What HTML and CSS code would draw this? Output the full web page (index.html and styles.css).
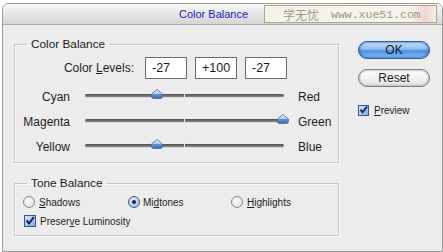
FILE: index.html
```html
<!DOCTYPE html>
<html lang="en">
<head>
    <meta charset="UTF-8">
    <meta name="viewport" content="width=device-width, initial-scale=1.0">
    <title>Color Balance</title>
    <link rel="stylesheet" href="styles.css">
</head>
<body>
    <div class="dialog">
        <!-- title bar -->
        <div class="titlebar">
            <span class="title">Color Balance</span>
            <div class="watermark">
                <span class="wm-cn">学无忧</span>
                <span class="wm-url">www.xue51.com</span>
            </div>
        </div>

        <div class="content">
            <div class="left">
                <fieldset class="group group-color">
                    <legend>Color Balance</legend>
                    <div class="levels">
                        <label class="levels-label">Color <u>L</u>evels:</label>
                        <input type="text" class="level" value="-27">
                        <input type="text" class="level" value="+100">
                        <input type="text" class="level" value="-27">
                    </div>
                    <div class="sliders">
                        <span class="s-left">Cyan</span>
                        <div class="track">
                            <span class="mid"></span>
                            <svg class="thumb" style="left:66px" width="12" height="10" viewBox="0 0 12 10"><use href="#thumb"/></svg>
                        </div>
                        <span class="s-right">Red</span>

                        <span class="s-left">Magenta</span>
                        <div class="track">
                            <span class="mid"></span>
                            <svg class="thumb" style="left:192px" width="12" height="10" viewBox="0 0 12 10"><use href="#thumb"/></svg>
                        </div>
                        <span class="s-right">Green</span>

                        <span class="s-left">Yellow</span>
                        <div class="track">
                            <span class="mid"></span>
                            <svg class="thumb" style="left:66px" width="12" height="10" viewBox="0 0 12 10"><use href="#thumb"/></svg>
                        </div>
                        <span class="s-right">Blue</span>
                    </div>
                </fieldset>

                <fieldset class="group group-tone">
                    <legend>Tone Balance</legend>
                    <div class="radios">
                        <label class="opt"><span class="radio"></span><u>S</u>hadows</label>
                        <label class="opt"><span class="radio checked"></span>Mi<u>d</u>tones</label>
                        <label class="opt"><span class="radio"></span><u>H</u>ighlights</label>
                    </div>
                    <label class="opt check-row">
                        <span class="checkbox"><svg width="10" height="10" viewBox="0 0 10 10"><use href="#tick"/></svg></span>Preser<u>v</u>e Luminosity
                    </label>
                </fieldset>
            </div>

            <div class="right">
                <button class="btn btn-ok">OK</button>
                <button class="btn btn-reset">Reset</button>
                <label class="opt preview">
                    <span class="checkbox"><svg width="10" height="10" viewBox="0 0 10 10"><use href="#tick"/></svg></span><u>P</u>review
                </label>
            </div>
        </div>
    </div>

    <!-- shared shapes -->
    <svg class="defs" width="0" height="0">
        <defs>
            <linearGradient id="thumbFill" x1="0" y1="0" x2="0" y2="1">
                <stop offset="0" stop-color="#eef3fb"/>
                <stop offset="0.45" stop-color="#b5cdef"/>
                <stop offset="0.55" stop-color="#5d8fd6"/>
                <stop offset="1" stop-color="#3d6cb8"/>
            </linearGradient>
            <symbol id="thumb" viewBox="0 0 12 10">
                <path d="M6 0.5 L11.5 5 L11.5 7.5 Q11.5 9.5 9.5 9.5 L2.5 9.5 Q0.5 9.5 0.5 7.5 L0.5 5 Z" fill="url(#thumbFill)" stroke="#47679a" stroke-width="0.8"/>
            </symbol>
            <symbol id="tick" viewBox="0 0 10 10">
                <path d="M1.5 4.5 L4 7.5 L8.8 1.2" fill="none" stroke="#1a2560" stroke-width="2"/>
            </symbol>
        </defs>
    </svg>
</body>
</html>
```

FILE: styles.css
```css
body {
    margin: 0;
    background: #ffffff;
    font-family: "Liberation Sans", Arial, sans-serif;
    color: #1e1e1e;
}
.defs {
    position: absolute;
}
.dialog {
    margin: 3px 0 0 2px;
    width: 439px;
    height: 247px;
    border: 1px solid #9c9c9c;
    border-radius: 6px 6px 0 0;
    background: #ececec;
    overflow: hidden;
}
.titlebar {
    height: 20px;
    display: flex;
    align-items: flex-start;
    background: linear-gradient(#f7f7f7, #d5d5d5);
    border-bottom: 1px solid #a9a9a9;
}
.title {
    margin: 4px 0 0 176px;
    font-size: 11px;
    color: #2020c8;
}
.watermark {
    margin: 1px 5px 0 auto;
    width: 173px;
    height: 18px;
    display: flex;
    align-items: center;
    gap: 12px;
    padding-left: 18px;
    box-sizing: border-box;
    border: 1px solid #b4a578;
    background: linear-gradient(90deg, #f3f2ed 0%, #f5f4ef 85%, #f2d4d4 94%, #f4f1ec 100%);
}
.wm-cn {
    font-family: "Noto Sans CJK SC", sans-serif;
    font-size: 12px;
    color: #9f9c86;
}
.wm-url {
    font-family: "Liberation Mono", monospace;
    font-size: 11.5px;
    color: #9c987e;
}

.content {
    display: flex;
    padding: 12px 0 0 11px;
}
.left {
    width: 325px;
}
.group {
    margin: 0;
    padding: 0;
    border: 1px solid #c6c6c6;
    box-shadow: inset 1px 1px 0 #fafafa, 1px 1px 0 #fafafa;
}
.group legend {
    margin-left: 12px;
    padding: 0 4px;
    font-size: 11.8px;
    line-height: 14px;
    color: #1a1a1a;
}
.group-color {
    height: 126px;
    box-sizing: border-box;
}
.group-tone {
    margin-top: 13px;
    height: 60px;
    box-sizing: border-box;
}

/* color levels */
.levels {
    display: grid;
    grid-template-columns: 122px 42px 42px 42px;
    column-gap: 8px;
    align-items: center;
    margin-top: 6px;
}
.levels-label {
    text-align: right;
    font-size: 12px;
    margin-right: 3px;
}
.level {
    width: 42px;
    height: 22px;
    box-sizing: border-box;
    border: 1px solid #6a6a6a;
    background: #ffffff;
    padding: 0 0 0 6px;
    font-family: "Liberation Sans", Arial, sans-serif;
    font-size: 12.5px;
    color: #1a1a1a;
}

/* sliders */
.sliders {
    display: grid;
    grid-template-columns: 56px 199px auto;
    grid-auto-rows: 25px;
    column-gap: 14px;
    align-items: center;
    margin-top: 5px;
}
.s-left {
    text-align: right;
    font-size: 12px;
    margin-right: 1px;
}
.s-right {
    font-size: 12px;
}
.track {
    position: relative;
    height: 25px;
}
.track::before {
    content: "";
    position: absolute;
    left: 0;
    right: 0;
    top: 10px;
    height: 3px;
    border-radius: 2px;
    background: linear-gradient(#4c4c4c, #8a8a8a);
    box-shadow: 0 1px 0 #d9d9d9;
}
.mid {
    position: absolute;
    left: 99px;
    top: 8px;
    width: 1px;
    height: 8px;
    background: #e6e6e6;
}
.thumb {
    position: absolute;
    top: 5px;
}

/* tone balance */
.radios {
    display: grid;
    grid-template-columns: 105px 103px auto;
    padding-left: 8px;
    margin-top: 5px;
}
.opt {
    display: flex;
    align-items: center;
    font-size: 10px;
    color: #1e1e1e;
    height: 14px;
}
.radio {
    width: 12px;
    height: 12px;
    box-sizing: border-box;
    border-radius: 50%;
    border: 1px solid #8b8b8b;
    background: radial-gradient(circle at 40% 35%, #ffffff, #d6d6d6);
    margin-right: 4px;
    position: relative;
}
.radio.checked {
    border-color: #3b5f92;
    background: radial-gradient(circle at 40% 35%, #e9f2fd, #8db4e6);
    margin-right: 3px;
}
.radio.checked::after {
    content: "";
    position: absolute;
    left: 3px;
    top: 3px;
    width: 4px;
    height: 4px;
    border-radius: 50%;
    background: #18244e;
}
.check-row {
    margin: 5px 0 0 9px;
}
.checkbox {
    width: 12px;
    height: 12px;
    box-sizing: border-box;
    border: 1px solid #3c5784;
    background: linear-gradient(135deg, #d6e6fa, #7faae3);
    margin-right: 4px;
    display: flex;
    align-items: center;
    justify-content: center;
}

/* right column */
.right {
    display: flex;
    flex-direction: column;
    align-items: flex-start;
    padding: 4px 0 0 19px;
}
.btn {
    width: 72px;
    height: 18px;
    padding: 0;
    border-radius: 9px;
    font-family: "Liberation Sans", Arial, sans-serif;
    font-size: 12px;
    color: #1a1a1a;
    cursor: pointer;
}
.btn-ok {
    border: 1px solid #2b5aa6;
    background: linear-gradient(#cfe4fb 0%, #8dbbf0 45%, #4d8fe2 55%, #86bdf5 100%);
    box-shadow: inset 0 0 3px #1f4f9f;
}
.btn-reset {
    margin-top: 10px;
    border: 1px solid #7d7d7d;
    background: linear-gradient(#ffffff 0%, #f2f2f2 50%, #e2e2e2 100%);
    box-shadow: inset 0 0 3px #9a9a9a;
}
.preview {
    margin-top: 16px;
}
.preview .checkbox {
    width: 11px;
    height: 11px;
    margin-right: 5px;
}
```
